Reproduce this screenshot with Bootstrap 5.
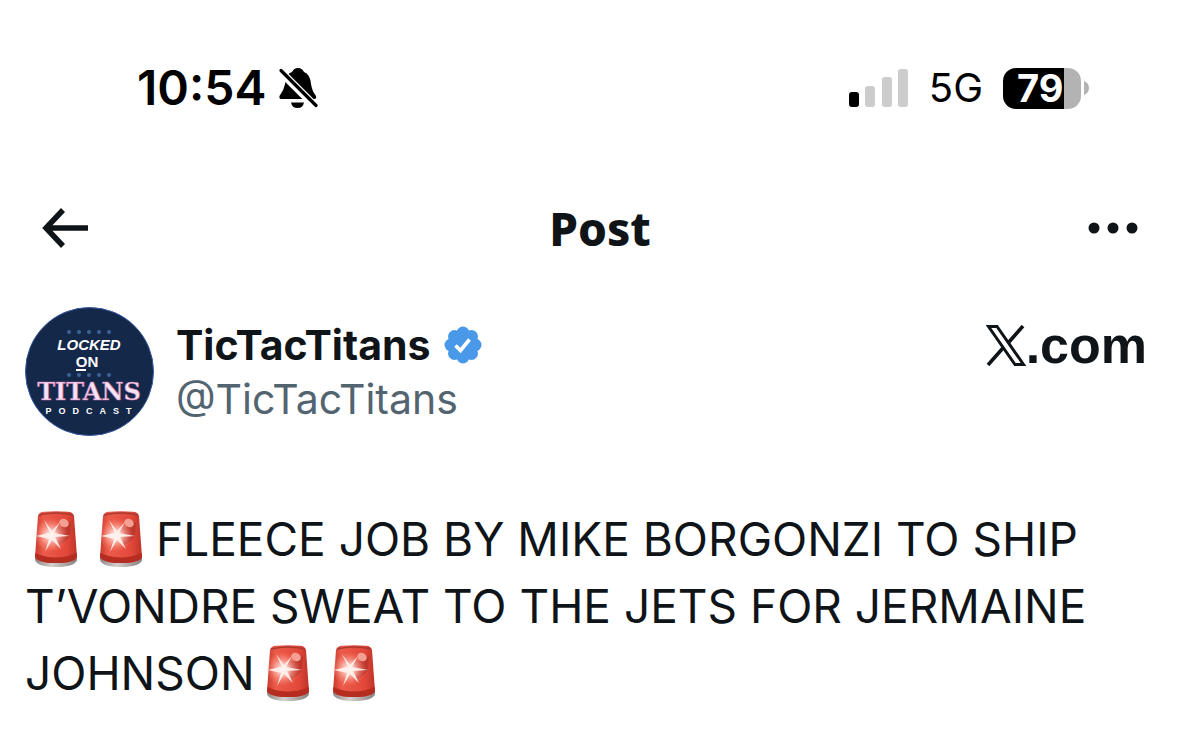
<!DOCTYPE html>
<html lang="en">
<head>
<meta charset="utf-8">
<meta name="viewport" content="width=device-width, initial-scale=1">
<title>Post</title>
<link href="https://cdn.jsdelivr.net/npm/bootstrap@5.3.0/dist/css/bootstrap.min.css" rel="stylesheet">
<style>
  body { font-family: Inter, "Liberation Sans", sans-serif; color: #0f1419; background: #fff; }
  svg { display: block; flex: none; }
  .status-bar { height: 60px; margin-top: 58px; padding-left: 137px; padding-right: 111px; color: #000; }
  .clock { font-size: 48px; font-weight: 600; line-height: 60px; margin-right: 12px; }
  .network { font-size: 40px; line-height: 60px; margin-left: 20px; margin-right: 20px; }
  .battery { width: 78px; height: 41px; border-radius: 13px; background: linear-gradient(to right, #000 61px, #b3b3b3 61px); color: #fff; font-size: 38px; font-weight: 700; line-height: 41px; padding-left: 14px; margin-right: 3px; }
  .title-bar { height: 60px; margin-top: 80px; padding: 0 42px; }
  .title-bar h1 { font-family: "Noto Sans", sans-serif; font-size: 46px; font-weight: 800; line-height: 60px; }
  .icon-btn { border: 0; background: none; padding: 0; color: inherit; }
  .side-slot { width: 70px; }
  .author { margin-top: 49px; padding: 0 53px 0 25px; }
  .names { margin-left: 22px; padding-top: 11px; }
  .names a { color: inherit; text-decoration: none; }
  .display-name { font-size: 41px; font-weight: 700; line-height: 54px; gap: 14px; }
  .names .handle { color: #536471; font-size: 41px; line-height: 54px; }
  .site { font-family: "Liberation Sans", sans-serif; font-size: 52px; font-weight: 700; line-height: 54px; padding-top: 11px; color: inherit; text-decoration: none; }
  .post-text { font-size: 46px; line-height: 67px; margin: 70px 25px 0; }
  .post-text svg { display: inline-block; vertical-align: -11px; }
</style>
</head>
<body>
<svg width="0" height="0" class="position-absolute" aria-hidden="true">
  <defs>
    <linearGradient id="dome" x1="0" x2="1"><stop offset="0" stop-color="#c93a2c"/><stop offset=".2" stop-color="#ec5b4a"/><stop offset=".75" stop-color="#e2483a"/><stop offset="1" stop-color="#bd3427"/></linearGradient>
    <linearGradient id="base" x1="0" x2="1"><stop offset="0" stop-color="#8e8a8a"/><stop offset=".4" stop-color="#d5d0ce"/><stop offset="1" stop-color="#858181"/></linearGradient>
    <radialGradient id="glow"><stop offset="0" stop-color="#fff"/><stop offset=".35" stop-color="#ffd0c8" stop-opacity=".8"/><stop offset="1" stop-color="#ff8a78" stop-opacity="0"/></radialGradient>
    <symbol id="siren" viewBox="0 0 44 56">
      <path d="M1 46Q22 54 43 46V49Q41 56 22 56Q3 56 1 49Z" fill="url(#base)"/>
      <path d="M4 5Q5 1 10 .8Q22-.4 34 .8Q39 1 40 5L43 46Q40 52 22 52Q4 52 1 46Z" fill="url(#dome)"/>
      <path d="M1.300 42Q22 51 42.700 42L43 46Q40 52 22 52Q4 52 1 46Z" fill="#b52c20"/>
      <path d="M5 4Q22 0 39 4" fill="none" stroke="#a93a30" stroke-width="1.500"/>
      <path d="M21 16Q29 18 37 11L36 24Q33 31 25 34Z" fill="#a82f26" opacity=".6"/>
      <ellipse cx="30" cy="12" rx="5" ry="4" transform="rotate(35 30 12)" fill="#f3a094"/>
      <circle cx="17" cy="24" r="17" fill="url(#glow)"/>
      <path d="M17 24L10 9L18 20L26 11L20 22L36 25L21 26L27 38L18 29L11 41L15 28L2 25L14 22Z" fill="#fff3ef" opacity=".9"/>
    </symbol>
  </defs>
</svg>

<div class="status-bar d-flex align-items-center">
  <span class="clock">10:54</span>
  <svg class="me-auto" width="42" height="42" viewBox="0 0 42 42" role="img" aria-label="Silent mode">
    <path d="M3 32Q1 32 1.500 29Q6 23 7 17Q8 6 14 5Q16 1 20 1T26 5Q32 7 33 17Q34 24 38 29Q39 32 36 32Z" fill="#000"/>
    <path d="M13 35.500H26Q25 41 19.500 41T13 35.500Z" fill="#000"/>
    <path d="M-1 1L38 40" stroke="#fff" stroke-width="8"/>
    <path d="M3 3.500L38 38.500" stroke="#000" stroke-width="3.200" stroke-linecap="round"/>
  </svg>
  <svg width="60" height="38" viewBox="0 0 60 38" role="img" aria-label="Signal strength 1 of 4">
    <rect y="23" width="10" height="15" rx="3"/>
    <g fill="#ccc"><rect x="16" y="17" width="10" height="21" rx="3"/><rect x="33" y="8" width="10" height="30" rx="3"/><rect x="49" width="10" height="38" rx="3"/></g>
  </svg>
  <span class="network">5G</span>
  <span class="battery">79</span>
  <svg width="5" height="14" viewBox="0 0 5 14" aria-hidden="true"><path d="M0 0Q5 2 5 7T0 14Z" fill="#b3b3b3"/></svg>
</div>

<header class="title-bar d-flex align-items-center justify-content-between">
  <div class="side-slot d-flex">
    <button type="button" class="icon-btn" aria-label="Back">
      <svg width="46" height="42" viewBox="0 0 46 42" fill="none" stroke="currentColor" stroke-width="5.500"><path d="M21 3L4 21L21 39M4 21H46"/></svg>
    </button>
  </div>
  <h1 class="m-0">Post</h1>
  <div class="side-slot d-flex">
    <button type="button" class="icon-btn" aria-label="More">
      <svg width="52" height="12" viewBox="0 0 52 12" fill="currentColor"><circle cx="6" cy="6" r="5.500"/><circle cx="25" cy="6" r="5.500"/><circle cx="44" cy="6" r="5.500"/></svg>
    </button>
  </div>
</header>

<main>
  <div class="author d-flex align-items-start">
    <svg width="129" height="129" viewBox="0 0 129 129" role="img" aria-label="Locked On Titans Podcast">
      <circle cx="64.500" cy="64.500" r="64" fill="#14284a" stroke="#3558a0"/>
      <g fill="#3d6296"><circle cx="44" cy="25" r="2"/><circle cx="54" cy="25" r="2"/><circle cx="64" cy="25" r="2"/><circle cx="74" cy="25" r="2"/><circle cx="84" cy="25" r="2"/><circle cx="44" cy="68" r="2"/><circle cx="54" cy="68" r="2"/><circle cx="64" cy="68" r="2"/><circle cx="74" cy="68" r="2"/><circle cx="84" cy="68" r="2"/></g>
      <g text-anchor="middle" fill="#fff" font-weight="700">
        <text x="64" y="43" font-size="15" font-style="italic" font-family="Liberation Sans, sans-serif">LOCKED</text>
        <text x="62" y="60" font-size="15" font-family="Liberation Sans, sans-serif">ON</text>
        <text x="64" y="93" font-size="24" font-family="DejaVu Serif, serif" fill="#f3e3f3" stroke="#c56aa5" stroke-width=".6">TITANS</text>
        <text x="67" y="107" font-size="9" letter-spacing="7" font-family="Liberation Sans, sans-serif">PODCAST</text>
      </g>
      <path d="M51 63H61" stroke="#fff" stroke-width="2"/>
    </svg>
    <div class="names me-auto">
      <div class="display-name d-flex align-items-center">
        <a href="#">TicTacTitans</a>
        <svg width="38" height="38" viewBox="0 0 38 38" role="img" aria-label="Verified">
          <g fill="#4a99e9"><circle cx="19" cy="19" r="15"/><circle cx="19" cy="7" r="6.500"/><circle cx="27.500" cy="10.500" r="6.500"/><circle cx="31" cy="19" r="6.500"/><circle cx="27.500" cy="27.500" r="6.500"/><circle cx="19" cy="31" r="6.500"/><circle cx="10.500" cy="27.500" r="6.500"/><circle cx="7" cy="19" r="6.500"/><circle cx="10.500" cy="10.500" r="6.500"/></g>
          <path d="M11.500 19.500L16.500 24.500L25.500 13.500" fill="none" stroke="#fff" stroke-width="3.600"/>
        </svg>
      </div>
      <a class="handle d-block" href="#">@TicTacTitans</a>
    </div>
    <a class="site d-flex align-items-center" href="#" aria-label="X.com">
      <svg width="40" height="41" viewBox="0 0 40 41" fill="none" stroke="currentColor"><path d="M2.500 1.500H11L37.500 39.500H29Z" stroke-width="3"/><path d="M37 1L22.500 17.500M17 23L2 40" stroke-width="3.600"/></svg><span>.com</span>
    </a>
  </div>

  <p class="post-text"><svg width="62" height="56" role="img" aria-label="Siren"><use href="#siren" x="9" width="44" height="56"/></svg><svg width="69" height="56" role="img" aria-label="Siren"><use href="#siren" x="12" width="44" height="56"/></svg>FLEECE JOB BY MIKE BORGONZI TO SHIP<br>T’VONDRE SWEAT TO THE JETS FOR JERMAINE<br>JOHNSON<svg width="66" height="56" role="img" aria-label="Siren"><use href="#siren" x="11" width="44" height="56"/></svg><svg width="66" height="56" role="img" aria-label="Siren"><use href="#siren" x="11" width="44" height="56"/></svg></p>
</main>
<script src="https://cdn.jsdelivr.net/npm/bootstrap@5.3.0/dist/js/bootstrap.bundle.min.js"></script>
</body>
</html>
